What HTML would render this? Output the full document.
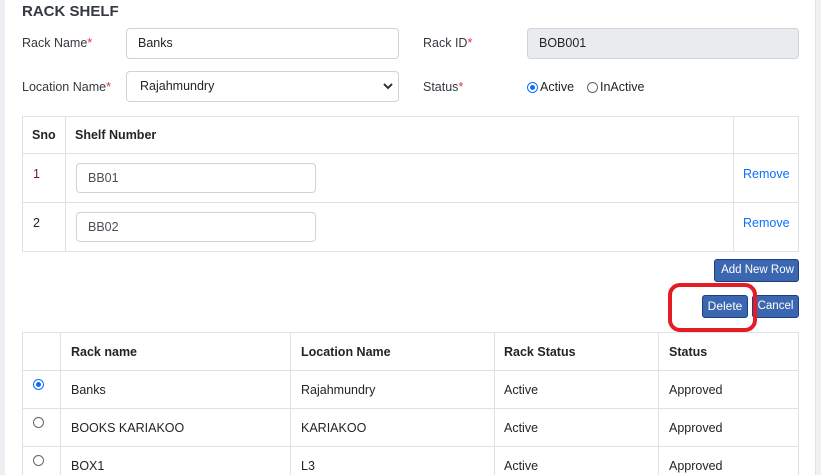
<!DOCTYPE html>
<html><head><meta charset="utf-8"><style>
*{box-sizing:border-box;margin:0;padding:0}
body{width:821px;height:475px;overflow:hidden;background:#fff;font-family:"Liberation Sans",sans-serif;font-size:12.5px;color:#212529;position:relative}
.a{position:absolute}
.lbl{color:#343a40}
.req{color:#dc3545}
.inp{position:absolute;border:1px solid #ced4da;border-radius:4px;background:#fff;padding-left:11px;line-height:29px;height:31px}
.btn{position:absolute;background:#3a67b0;border:1px solid #1d3e85;border-radius:3px;color:#fff;font-size:12px;text-align:center;line-height:21px;height:23px}
.bd{position:absolute;background:#dee2e6}
.radio{position:absolute;width:11px;height:11px;border-radius:50%;border:1px solid #666;background:#fff}
.radio.on{border:1px solid #0d6efd;background:#fff}
.radio.on:after{content:"";position:absolute;left:2px;top:2px;width:5px;height:5px;border-radius:50%;background:#0d6efd}
.th{font-weight:bold;color:#212529}
.link{color:#0d6efd}
</style></head><body>
<div class="a" style="left:0;top:0;width:5px;height:475px;background:#eceef1"></div>
<div class="a" style="left:815px;top:0;width:6px;height:475px;background:#f1f1f3;border-left:1px solid #e2e2e6"></div>

<div class="a" style="left:22px;top:3px;font-size:15px;font-weight:bold;color:#343a40">RACK SHELF</div>

<div class="a lbl" style="left:22px;top:36px">Rack Name<span class="req">*</span></div>
<div class="inp" style="left:126px;top:28px;width:273px">Banks</div>
<div class="a lbl" style="left:423px;top:36px">Rack ID<span class="req">*</span></div>
<div class="inp" style="left:527px;top:28px;width:272px;background:#e9ecef">BOB001</div>

<div class="a lbl" style="left:22px;top:80px">Location Name<span class="req">*</span></div>
<div class="inp" style="left:126px;top:71px;width:273px;padding-left:13px">Rajahmundry
<svg class="a" style="right:5px;top:10px" width="10" height="8" viewBox="0 0 10 8"><path d="M1 2 L5 6 L9 2" fill="none" stroke="#333" stroke-width="2"/></svg></div>
<div class="a lbl" style="left:423px;top:80px">Status<span class="req">*</span></div>
<div class="radio on" style="left:527px;top:82px"></div>
<div class="a" style="left:540px;top:80px">Active</div>
<div class="radio" style="left:587px;top:82px"></div>
<div class="a" style="left:600px;top:80px">InActive</div>

<div class="bd" style="left:22px;top:116px;width:777px;height:1px"></div>
<div class="bd" style="left:22px;top:153px;width:777px;height:1px"></div>
<div class="bd" style="left:22px;top:202px;width:777px;height:1px"></div>
<div class="bd" style="left:22px;top:251px;width:777px;height:1px"></div>
<div class="bd" style="left:22px;top:116px;width:1px;height:136px"></div>
<div class="bd" style="left:65px;top:116px;width:1px;height:136px"></div>
<div class="bd" style="left:733px;top:116px;width:1px;height:136px"></div>
<div class="bd" style="left:798px;top:116px;width:1px;height:136px"></div>
<div class="a th" style="left:32px;top:128px">Sno</div>
<div class="a th" style="left:75px;top:128px">Shelf Number</div>
<div class="a" style="left:33px;top:167px;color:#6a1a3a">1</div>
<div class="inp" style="left:76px;top:163px;width:240px;height:30px;line-height:28px;color:#495057">BB01</div>
<div class="a link" style="left:743px;top:167px">Remove</div>
<div class="a" style="left:33px;top:216px">2</div>
<div class="inp" style="left:76px;top:212px;width:240px;height:30px;line-height:28px;color:#495057">BB02</div>
<div class="a link" style="left:743px;top:216px">Remove</div>

<div class="btn" style="left:714px;top:259px;width:85px;font-size:11.5px;padding-left:2px">Add New Row</div>
<div class="btn" style="left:702px;top:295px;width:46px">Delete</div>
<div class="btn" style="left:752px;top:295px;width:47px;font-size:11.5px">Cancel</div>
<div class="a" style="left:668px;top:283px;width:89px;height:49px;border:4px solid #e41c24;border-radius:12px"></div>

<div class="bd" style="left:22px;top:332px;width:777px;height:1px"></div>
<div class="bd" style="left:22px;top:370px;width:777px;height:1px"></div>
<div class="bd" style="left:22px;top:408px;width:777px;height:1px"></div>
<div class="bd" style="left:22px;top:446px;width:777px;height:1px"></div>
<div class="bd" style="left:22px;top:332px;width:1px;height:143px"></div>
<div class="bd" style="left:60px;top:332px;width:1px;height:143px"></div>
<div class="bd" style="left:290px;top:332px;width:1px;height:143px"></div>
<div class="bd" style="left:494px;top:332px;width:1px;height:143px"></div>
<div class="bd" style="left:658px;top:332px;width:1px;height:143px"></div>
<div class="bd" style="left:798px;top:332px;width:1px;height:143px"></div>
<div class="a th" style="left:71px;top:345px">Rack name</div>
<div class="a th" style="left:301px;top:345px">Location Name</div>
<div class="a th" style="left:504px;top:345px">Rack Status</div>
<div class="a th" style="left:669px;top:345px">Status</div>

<div class="radio on" style="left:33px;top:379px"></div>
<div class="a" style="left:71px;top:383px">Banks</div>
<div class="a" style="left:301px;top:383px">Rajahmundry</div>
<div class="a" style="left:504px;top:383px">Active</div>
<div class="a" style="left:669px;top:383px">Approved</div>

<div class="radio" style="left:33px;top:417px"></div>
<div class="a" style="left:71px;top:421px">BOOKS KARIAKOO</div>
<div class="a" style="left:301px;top:421px">KARIAKOO</div>
<div class="a" style="left:504px;top:421px">Active</div>
<div class="a" style="left:669px;top:421px">Approved</div>

<div class="radio" style="left:33px;top:455px"></div>
<div class="a" style="left:71px;top:459px">BOX1</div>
<div class="a" style="left:301px;top:459px">L3</div>
<div class="a" style="left:504px;top:459px">Active</div>
<div class="a" style="left:669px;top:459px">Approved</div>
</body></html>
